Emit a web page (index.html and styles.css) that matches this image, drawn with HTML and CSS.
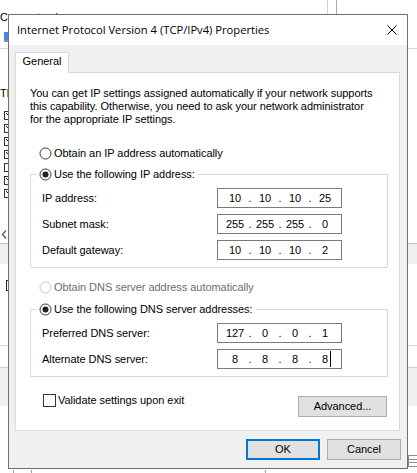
FILE: index.html
```html
<!DOCTYPE html>
<html lang="en">
<head>
<meta charset="utf-8">
<title>Internet Protocol Version 4 (TCP/IPv4) Properties</title>
<link rel="stylesheet" href="styles.css">
</head>
<body>
<div class="desktop">
  <div class="bgwin">
    <div class="bg-top">
      <span class="bg-label">Connect using:</span>
      <span class="bg-field"></span>
    </div>
    <div class="bg-icon"></div>
    <div class="bg-sep"></div>
    <div class="bg-label2">This connection uses the following items:</div>
    <div class="bg-items">
      <span class="bg-check on"></span>
      <span class="bg-check on"></span>
      <span class="bg-check on"></span>
      <span class="bg-check on"></span>
      <span class="bg-check"></span>
      <span class="bg-check on"></span>
      <span class="bg-check on"></span>
    </div>
    <svg class="bg-arrow" width="6" height="9" viewBox="0 0 6 9"><polyline points="5,0.5 1.5,4.5 5,8.5" fill="none" stroke="#606060" stroke-width="1.4"/></svg>
    <div class="bg-scroll"></div>
    <div class="bg-focus"></div>
    <div class="bg-line"></div>
    <div class="bg-panel"></div>
    <div class="bg-grip"></div>
    <div class="bg-ticks"><span class="tick t1"></span><span class="tick t2"></span><span class="tick t3"></span></div>
  </div>

  <div class="dialog">
    <div class="titlebar">
      <span class="title">Internet Protocol Version 4 (TCP/IPv4) Properties</span>
      <svg class="close" width="10" height="10" viewBox="0 0 10 10"><path d="M0.5 0.5 L9.5 9.5 M9.5 0.5 L0.5 9.5" stroke="#000" stroke-width="1" fill="none"/></svg>
    </div>
    <div class="dlg-body">
      <div class="tabs">
        <div class="tab">General</div>
        <div class="tab-fill"></div>
      </div>
      <div class="panel">
        <p class="desc">You can get IP settings assigned automatically if your network supports<br>this capability. Otherwise, you need to ask your network administrator<br>for the appropriate IP settings.</p>

        <div class="opt opt-ip">
          <svg class="radio" width="13" height="13" viewBox="0 0 13 13"><circle cx="6.5" cy="6.5" r="5.5" fill="#fff" stroke="#333"/></svg>
          <span>Obtain an IP address automatically</span>
        </div>

        <div class="group group-ip">
          <div class="legend">
            <svg class="radio" width="13" height="13" viewBox="0 0 13 13"><circle cx="6.5" cy="6.5" r="5.5" fill="#fff" stroke="#333"/><circle cx="6.5" cy="6.5" r="3" fill="#222"/></svg>
            <span>Use the following IP address:</span>
          </div>
          <div class="field">
            <span>IP address:</span>
            <div class="ip"><span>10</span><span>.</span><span>10</span><span>.</span><span>10</span><span>.</span><span>25</span></div>
          </div>
          <div class="field">
            <span>Subnet mask:</span>
            <div class="ip"><span>255</span><span>.</span><span>255</span><span>.</span><span>255</span><span>.</span><span>0</span></div>
          </div>
          <div class="field">
            <span>Default gateway:</span>
            <div class="ip"><span>10</span><span>.</span><span>10</span><span>.</span><span>10</span><span>.</span><span>2</span></div>
          </div>
        </div>

        <div class="opt opt-dns disabled">
          <svg class="radio" width="13" height="13" viewBox="0 0 13 13"><circle cx="6.5" cy="6.5" r="5.5" fill="#fff" stroke="#c6c6c6"/></svg>
          <span>Obtain DNS server address automatically</span>
        </div>

        <div class="group group-dns">
          <div class="legend">
            <svg class="radio" width="13" height="13" viewBox="0 0 13 13"><circle cx="6.5" cy="6.5" r="5.5" fill="#fff" stroke="#333"/><circle cx="6.5" cy="6.5" r="3" fill="#222"/></svg>
            <span>Use the following DNS server addresses:</span>
          </div>
          <div class="field">
            <span>Preferred DNS server:</span>
            <div class="ip"><span>127</span><span>.</span><span>0</span><span>.</span><span>0</span><span>.</span><span>1</span></div>
          </div>
          <div class="field">
            <span>Alternate DNS server:</span>
            <div class="ip"><span>8</span><span>.</span><span>8</span><span>.</span><span>8</span><span>.</span><span>8<i class="caret"></i></span></div>
          </div>
        </div>

        <div class="bottomrow">
          <label class="check"><span class="box"></span><span>Validate settings upon exit</span></label>
          <button class="btn adv" type="button">Advanced...</button>
        </div>
      </div>
      <div class="actions">
        <button class="btn ok" type="button">OK</button>
        <button class="btn" type="button">Cancel</button>
      </div>
    </div>
  </div>
</div>
</body>
</html>
```
FILE: styles.css
```css
* { box-sizing: border-box; }

html, body {
  margin: 0;
  padding: 0;
}

body {
  background: #fff;
  color: #000;
  font-family: "Liberation Sans", Arial, sans-serif;
  font-size: 11px;
  line-height: 13px;
  letter-spacing: -0.05px;
}

.desktop {
  position: relative;
  width: 417px;
  height: 473px;
  overflow: hidden;
}

/* ---------- background window (mostly hidden behind the dialog) ---------- */
.bgwin {
  display: flex;
  flex-direction: column;
  width: 417px;
}

.bg-top {
  display: flex;
  height: 32px;
}

.bg-label {
  padding-top: 11px;
  white-space: nowrap;
}

.bg-field {
  margin-left: auto;
  margin-right: 80px;
  width: 10px;
  height: 32px;
  border-left: 1px solid #d4d4d4;
  border-right: 1px solid #a8a8a8;
}

.bg-icon {
  margin-left: 4px;
  width: 6px;
  height: 10px;
  background: #3d8ee0;
  border-bottom: 2px solid #8c8c8c;
}

.bg-sep {
  margin-top: 6px;
  height: 1px;
  background: #d4d4d4;
}

.bg-label2 {
  margin-top: 38px;
  white-space: nowrap;
}

.bg-items {
  margin-top: 11px;
  padding-left: 4px;
  display: flex;
  flex-direction: column;
  gap: 4px;
}

.bg-check {
  display: block;
  width: 12px;
  height: 9px;
  border: 1px solid #333;
  background: #fff;
}

.bg-check.on {
  background:
    linear-gradient(45deg, transparent 45%, #111 45%, #111 65%, transparent 65%) no-repeat 1px 1px / 4px 5px,
    #fff;
}

.bg-arrow {
  display: block;
  margin-top: 32px;
  margin-left: 1px;
}

.bg-scroll {
  margin-top: 4px;
  height: 21px;
  border-top: 1px solid #c8c8c8;
  background: #f0f0f0;
}

.bg-focus {
  margin-top: 16px;
  margin-left: 6px;
  width: 6px;
  height: 11px;
  border: 1px solid #1a1a6e;
}

.bg-line {
  margin-top: 54px;
  height: 1px;
  background: #d9d9d9;
}

.bg-panel {
  margin-top: 21px;
  height: 39px;
  border-top: 1px solid #d0d0d0;
  background: #f0f0f0;
}

.bg-grip {
  margin-top: 49px;
  margin-left: 408px;
  width: 9px;
  height: 12px;
  border-left: 1px solid #8a8a8a;
  background: repeating-linear-gradient(to bottom, #8a8a8a 0 1px, transparent 1px 3.6px);
}

.bg-ticks {
  display: flex;
  margin-top: 3px;
  height: 3px;
}

.tick {
  width: 1px;
  height: 3px;
  background: #a0a0a0;
}
.t1 { margin-left: 13px; }
.t2 { margin-left: 17px; }
.t3 { margin-left: 233px; }

/* ---------- dialog window ---------- */
.dialog {
  position: absolute;
  left: 8px;
  top: 14px;
  width: 400px;
  height: 455px;
  border: 1px solid #707070;
  background: #f0f0f0;
  display: flex;
  flex-direction: column;
}

.titlebar {
  height: 30px;
  flex: none;
  background: #fff;
  display: flex;
  align-items: center;
  padding-left: 8px;
}

.title {
  font-family: "Open Sans", "Noto Sans", sans-serif;
  font-size: 11.2px;
  line-height: 16px;
  letter-spacing: 0;
  white-space: nowrap;
}

.close {
  display: block;
  margin-left: auto;
  margin-right: 10px;
}

.dlg-body {
  flex: 1;
  display: flex;
  flex-direction: column;
}

.tabs {
  display: flex;
  margin: 7px 7px 0 6px;
}

.tab {
  width: 54px;
  height: 21px;
  padding-top: 2px;
  text-align: center;
  background: #fff;
  border: 1px solid #d9d9d9;
  border-bottom: none;
}

.tab-fill {
  flex: 1;
  height: 21px;
  border-bottom: 1px solid #d9d9d9;
}

.panel {
  margin: 0 7px 0 6px;
  background: #fff;
  border: 1px solid #d9d9d9;
  border-top: none;
  padding: 14px 11px 13px 14px;
  display: flex;
  flex-direction: column;
}

.desc {
  margin: 0;
  white-space: nowrap;
}

.opt {
  display: flex;
  align-items: center;
  height: 13px;
  padding-left: 9px;
  gap: 2px;
  white-space: nowrap;
}

.radio {
  display: block;
  flex: none;
}

.opt-ip { margin-top: 21px; }
.opt-dns { margin-top: 13px; }

.disabled { color: #6d6d6d; }

.group {
  border: 1px solid #d9d9d9;
  padding: 0 45px 7px 11px;
  display: flex;
  flex-direction: column;
  gap: 6px;
}

.group-ip { margin-top: 14px; }
.group-dns { margin-top: 15px; }

.legend {
  display: flex;
  align-items: center;
  gap: 2px;
  align-self: flex-start;
  height: 13px;
  margin: -7px 0 1px -5px;
  padding: 0 3px 0 2px;
  background: #fff;
  white-space: nowrap;
}

.field {
  display: grid;
  grid-template-columns: 1fr 125px;
  align-items: center;
  height: 20px;
  white-space: nowrap;
}

.ip {
  display: grid;
  grid-template-columns: 22px 8px 22px 8px 22px 8px 22px;
  align-items: center;
  height: 20px;
  padding-left: 6px;
  background: #fff;
  border: 1px solid #7a7a7a;
  text-align: center;
}

.caret {
  display: inline-block;
  width: 1px;
  height: 16px;
  margin-left: 2px;
  margin-right: -3px;
  vertical-align: -4px;
  background: #000;
}

.bottomrow {
  display: flex;
  align-items: flex-start;
  margin-top: 17px;
}

.check {
  display: flex;
  align-items: center;
  gap: 2px;
  height: 13px;
  margin-left: 13px;
  white-space: nowrap;
}

.box {
  display: block;
  width: 13px;
  height: 13px;
  border: 1px solid #333;
  background: #fff;
}

.btn {
  font: inherit;
  letter-spacing: inherit;
  color: #000;
  margin: 0;
  padding: 0;
  background: #e1e1e1;
  border: 1px solid #adadad;
  border-radius: 0;
  text-align: center;
}

.adv {
  margin: 2px 1px 0 auto;
  width: 89px;
  height: 21px;
}

.actions {
  display: flex;
  justify-content: flex-end;
  gap: 7px;
  margin-top: 8px;
  padding-right: 6px;
}

.actions .btn {
  width: 74px;
  height: 21px;
}

.actions .ok {
  border: 2px solid #0078d7;
}
```
